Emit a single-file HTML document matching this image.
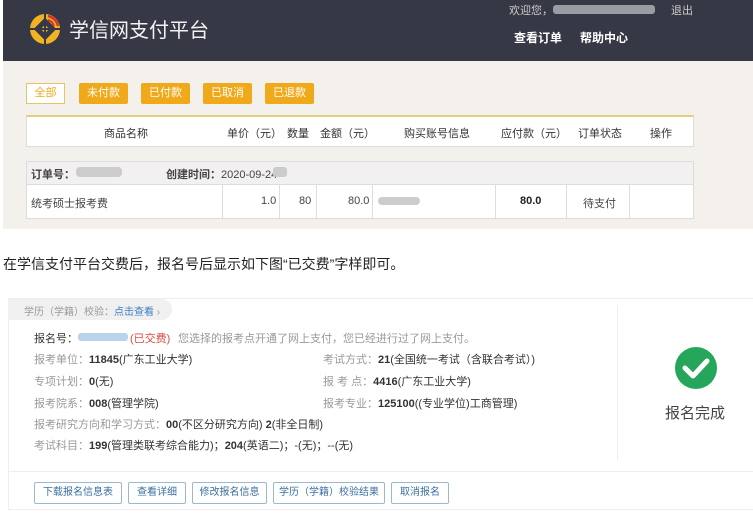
<!DOCTYPE html>
<html><head><meta charset="utf-8"><style>
*{margin:0;padding:0;box-sizing:border-box}
body{width:753px;height:524px;background:#fff;font-family:"Liberation Sans","Noto Sans CJK SC",sans-serif;position:relative;overflow:hidden;color:#333}
.a{position:absolute;white-space:nowrap}
.hdr{left:3px;top:0;width:750px;height:61px;background:#363845}
.beige{left:3px;top:61px;width:750px;height:168px;background:#f4f1ec}
.btn{top:83px;height:21px;width:49px;background:#f0a91a;color:#fff;font-size:11px;text-align:center;line-height:21px;border-radius:2px}
.box{background:#fff;border:1px solid #ddd}
.th{font-size:11px;color:#333;top:125px}
.td{font-size:11px;color:#444}
.vl{position:absolute;top:185px;height:33px;width:1px;background:#ddd}
.g{color:#999;font-size:11px}
.b{color:#333;font-size:11px}
.ob{top:482px;height:22px;border:1px solid #9bb8cc;border-radius:2px;font-size:10px;color:#3b6fa0;line-height:20px;text-align:center}
</style></head><body>
<div class="a hdr"></div>
<svg class="a" style="left:29px;top:12px" width="34" height="34" viewBox="0 0 34 34">
<circle cx="16" cy="17" r="15" fill="#f2b322"/>
<rect x="8" y="9" width="16" height="16" transform="rotate(45 16 17)" fill="#363845"/>
<rect x="13" y="14" width="6" height="6" transform="rotate(45 16 17)" fill="#f2b322"/>
<path d="M16 2 V32 M1 17 H31" stroke="#363845" stroke-width="2"/>
<path d="M19 4 A13 13 0 0 1 29 14" stroke="#d9312b" stroke-width="2.5" fill="none"/>
<path d="M19 8 A9 9 0 0 1 25 14" stroke="#d9312b" stroke-width="2" fill="none"/>
</svg>
<div class="a" style="left:69px;top:14px;font-size:20px;color:#f2f2f2">学信网支付平台</div>
<div class="a" style="left:509px;top:2px;font-size:11px;color:#ccc">欢迎您，</div>
<div class="a" style="left:553px;top:5px;width:102px;height:9px;background:#9a9ca4;border-radius:3px"></div>
<div class="a" style="left:671px;top:2px;font-size:11px;color:#ccc">退出</div>
<div class="a" style="left:514px;top:29px;font-size:12px;color:#fff;font-weight:bold">查看订单</div>
<div class="a" style="left:580px;top:29px;font-size:12px;color:#fff;font-weight:bold">帮助中心</div>
<div class="a beige"></div>
<div class="a" style="left:26px;top:83px;width:39px;height:21px;background:#fff;border:1px solid #e9c26a;color:#f0a91a;font-size:11px;text-align:center;line-height:19px">全部</div>
<div class="a btn" style="left:79px">未付款</div>
<div class="a btn" style="left:141px">已付款</div>
<div class="a btn" style="left:203px">已取消</div>
<div class="a btn" style="left:265px">已退款</div>
<div class="a box" style="left:26px;top:115px;width:668px;height:32px;border-top:2px solid #e7cf7a"></div>
<div class="a th" style="left:104px">商品名称</div>
<div class="a th" style="left:227px">单价（元）</div>
<div class="a th" style="left:287px">数量</div>
<div class="a th" style="left:320px">金额（元）</div>
<div class="a th" style="left:404px">购买账号信息</div>
<div class="a th" style="left:501px">应付款（元）</div>
<div class="a th" style="left:578px">订单状态</div>
<div class="a th" style="left:650px">操作</div>
<div class="a box" style="left:26px;top:161px;width:668px;height:58px"></div>
<div class="a" style="left:27px;top:162px;width:666px;height:23px;background:#f2f0f0;border-bottom:1px solid #ddd"></div>
<div class="a td" style="left:31px;top:166px;font-weight:bold">订单号：</div>
<div class="a" style="left:76px;top:167px;width:46px;height:10px;background:#ccc;border-radius:4px"></div>
<div class="a td" style="left:166px;top:166px"><b>创建时间：</b>2020-09-24</div>
<div class="a" style="left:273px;top:167px;width:14px;height:10px;background:#ccc;border-radius:3px"></div>
<div class="vl" style="left:222px"></div><div class="vl" style="left:279px"></div><div class="vl" style="left:316px"></div><div class="vl" style="left:372px"></div><div class="vl" style="left:495px"></div><div class="vl" style="left:566px"></div><div class="vl" style="left:629px"></div>
<div class="a td" style="left:31px;top:195px">统考硕士报考费</div>
<div class="a td" style="left:261px;top:195px">1.0</div>
<div class="a td" style="left:299px;top:195px">80</div>
<div class="a td" style="left:348px;top:195px">80.0</div>
<div class="a" style="left:378px;top:197px;width:42px;height:8px;background:#ccc;border-radius:4px"></div>
<div class="a td" style="left:520px;top:195px;font-weight:bold;color:#222">80.0</div>
<div class="a td" style="left:583px;top:195px">待支付</div>
<div class="a" style="left:3px;top:254px;font-size:14px;color:#222">在学信支付平台交费后，报名号后显示如下图“已交费”字样即可。</div>
<div class="a" style="left:8px;top:298px;width:745px;height:212px;border:1px solid #eee;border-right:none"></div>
<div class="a" style="left:8px;top:299px;width:164px;height:21px;background:#f0f0f0;border-radius:0 11px 11px 0"></div>
<div class="a g" style="left:24px;top:303px;font-size:10px">学历（学籍）校验：<span style="color:#3b7fc4">点击查看</span> ›</div>
<div class="a" style="left:617px;top:305px;width:1px;height:155px;background:#eee"></div>
<div class="a" style="left:9px;top:471px;width:744px;height:1px;background:#eee"></div>
<div class="a b" style="left:34px;top:330px">报名号：</div>
<div class="a" style="left:78px;top:333px;width:50px;height:8px;background:#b9d3ea;border-radius:3px"></div>
<div class="a" style="left:130px;top:330px;font-size:11px;color:#e0493c">(已交费)</div>
<div class="a g" style="left:178px;top:330px">您选择的报考点开通了网上支付，您已经进行过了网上支付。</div>
<div class="a g" style="left:34px;top:351px">报考单位：<b style="color:#333">11845</b><span style="color:#333">(广东工业大学)</span></div>
<div class="a g" style="left:323px;top:351px">考试方式：<b style="color:#333">21</b><span style="color:#333">(全国统一考试（含联合考试）)</span></div>
<div class="a g" style="left:34px;top:373px">专项计划：<b style="color:#333">0</b><span style="color:#333">(无)</span></div>
<div class="a g" style="left:323px;top:373px">报 考 点：<b style="color:#333">4416</b><span style="color:#333">(广东工业大学)</span></div>
<div class="a g" style="left:34px;top:395px">报考院系：<b style="color:#333">008</b><span style="color:#333">(管理学院)</span></div>
<div class="a g" style="left:323px;top:395px">报考专业：<b style="color:#333">125100</b><span style="color:#333">((专业学位)工商管理)</span></div>
<div class="a g" style="left:34px;top:416px">报考研究方向和学习方式：<b style="color:#333">00</b><span style="color:#333">(不区分研究方向) <b>2</b>(非全日制)</span></div>
<div class="a g" style="left:34px;top:437px">考试科目：<b style="color:#333">199</b><span style="color:#333">(管理类联考综合能力)；<b>204</b>(英语二)；-(无)；--(无)</span></div>
<svg class="a" style="left:674px;top:346px" width="44" height="44" viewBox="0 0 44 44"><circle cx="22" cy="22" r="21" fill="#26a65b"/><path d="M11 22 L19 30 L33 15" stroke="#fff" stroke-width="5" fill="none" stroke-linecap="round" stroke-linejoin="round"/></svg>
<div class="a" style="left:665px;top:402px;font-size:15px;color:#444">报名完成</div>
<div class="a ob" style="left:34px;top:482px;width:88px">下载报名信息表</div>
<div class="a ob" style="left:128px;top:482px;width:58px">查看详细</div>
<div class="a ob" style="left:192px;top:482px;width:75px">修改报名信息</div>
<div class="a ob" style="left:273px;top:482px;width:112px">学历（学籍）校验结果</div>
<div class="a ob" style="left:391px;top:482px;width:58px">取消报名</div>
</body></html>
